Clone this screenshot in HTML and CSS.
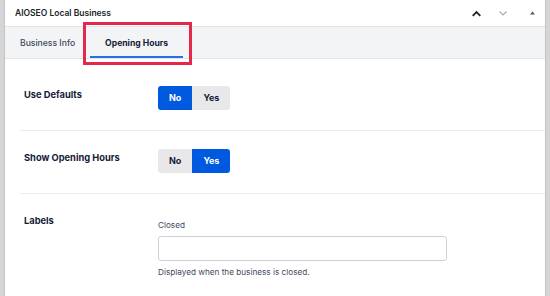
FILE: index.html
```html
<!DOCTYPE html>
<html lang="en">
<head>
    <meta charset="UTF-8">
    <meta name="viewport" content="width=device-width, initial-scale=1.0">
    <title>AIOSEO Local Business</title>
    <link rel="stylesheet" href="styles.css">
</head>
<body>

<div class="postbox">
    <div class="postbox-header">
        <span class="postbox-title">AIOSEO Local Business</span>
        <div class="handle-actions">
            <svg class="handle up" width="9" height="7" viewBox="0 0 9 7"><path d="M0.7 5.8 L4.5 2 L8.3 5.8" fill="none" stroke="#1d2327" stroke-width="1.8"/></svg>
            <svg class="handle down" width="8" height="7" viewBox="0 0 8 7"><path d="M0.5 1.5 L4 5 L7.5 1.5" fill="none" stroke="#a7aaad" stroke-width="1.1"/></svg>
            <svg class="handle toggle" width="5" height="4" viewBox="0 0 5 4"><path d="M0 3.5 L2.5 0.5 L5 3.5 Z" fill="#50575e"/></svg>
        </div>
    </div>

    <div class="tabs">
        <div class="tab">Business Info</div>
        <div class="tab active">Opening Hours</div>
    </div>

    <!-- annotation box around the active tab -->
    <div class="highlight"></div>

    <div class="settings">
        <div class="row">
            <div class="row-label">Use Defaults</div>
            <div class="row-control">
                <div class="radio-toggle">
                    <span class="option selected">No</span>
                    <span class="option">Yes</span>
                </div>
            </div>
        </div>

        <div class="row">
            <div class="row-label">Show Opening Hours</div>
            <div class="row-control">
                <div class="radio-toggle">
                    <span class="option">No</span>
                    <span class="option selected">Yes</span>
                </div>
            </div>
        </div>

        <div class="row last">
            <div class="row-label">Labels</div>
            <div class="row-control">
                <div class="field-name">Closed</div>
                <input class="text-input" type="text">
                <div class="field-help">Displayed when the business is closed.</div>
            </div>
        </div>
    </div>
</div>

</body>
</html>
```

FILE: styles.css
```css
/* Page */
body {
    margin: 0;
    background-color: #d5d5d5;
    font-family: Inter, "Noto Sans", sans-serif;
    color: #141b38;
}

/* Meta box */
.postbox {
    position: relative;
    margin: 0 4px;
    height: 296px;
    background-color: #fff;
    border-left: 1px solid #c3c4c7;
    border-right: 1px solid #c3c4c7;
    box-sizing: border-box;
}

.postbox-header {
    display: flex;
    justify-content: space-between;
    align-items: center;
    height: 26px;
    padding: 0 10px;
    border-bottom: 1px solid #e2e4e7;
}

.postbox-title {
    font-size: 8.5px;
    font-weight: 600;
    color: #1d2327;
}

.handle-actions {
    display: flex;
    align-items: center;
}

.handle.up {
    margin-right: 18px;
}

.handle.down {
    margin-right: 23px;
}

/* Tabs */
.tabs {
    display: flex;
    height: 31px;
    background-color: #f3f4f5;
    border-bottom: 1px solid #e2e4e7;
}

.tab {
    display: flex;
    align-items: center;
    padding: 0 15px;
    font-size: 8.6px;
    font-weight: 500;
    color: #434960;
}

.tab.active {
    font-weight: 700;
    color: #141b38;
    box-shadow: inset 0 -2px 0 #2c6fe0;
}

.highlight {
    position: absolute;
    left: 78px;
    top: 22px;
    width: 103px;
    height: 37px;
    border: 3px solid #e3274d;
}

/* Settings rows */
.settings {
    padding: 9px 0 0 15px;
}

.row {
    display: flex;
    padding: 18px 0 20px;
    border-bottom: 1px solid #ececef;
}

.row.last {
    border-bottom: none;
}

.row-label {
    width: 134px;
    padding-left: 4px;
    font-size: 9.3px;
    font-weight: 700;
    line-height: 17px;
}

.row-control {
    display: flex;
    flex-direction: column;
    align-items: flex-start;
}

/* Yes / No toggle */
.radio-toggle {
    display: flex;
    border-radius: 3px;
    overflow: hidden;
}

.option {
    height: 24px;
    line-height: 24px;
    padding: 0 11px;
    font-size: 9px;
    font-weight: 700;
    background-color: #e8e8eb;
    color: #141b38;
}

.option.selected {
    background-color: #005ae0;
    color: #fff;
}

/* Text field */
.field-name {
    margin-top: 5px;
    font-size: 8.2px;
    line-height: 16px;
    color: #434960;
}

.text-input {
    margin: 3px 0 0;
    width: 289px;
    height: 25px;
    box-sizing: border-box;
    border: 1px solid #d0d1d7;
    border-radius: 3px;
}

.field-help {
    margin-top: 3px;
    font-size: 8.2px;
    line-height: 16px;
    color: #434960;
}
```
